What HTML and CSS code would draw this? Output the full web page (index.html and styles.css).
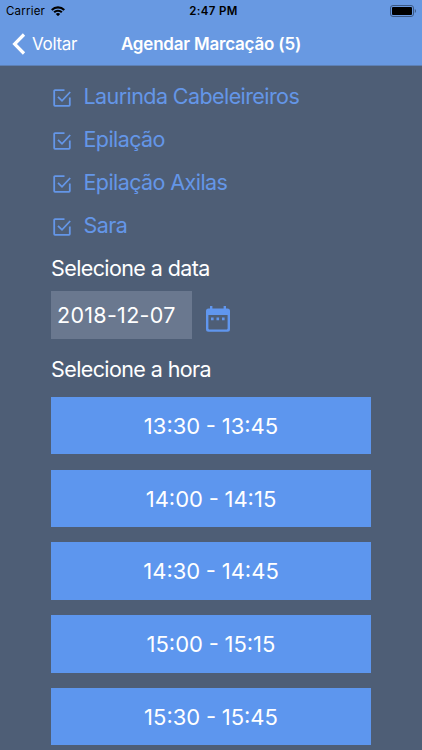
FILE: index.html
```html
<!DOCTYPE html>
<html lang="pt">

<head>
	<meta charset="utf-8">
	<title>Agendar Marcação</title>
	<link rel="stylesheet" href="styles.css">
</head>

<body>
	<header class="header">
		<div class="status-bar">
			<div class="carrier">
				<span>Carrier</span>
				<svg class="wifi" viewBox="0 0 14 10">
					<path d="M0 3.2a10 10 0 0 1 14 0L12.5 4.7a7.8 7.8 0 0 0-11 0z" />
					<path d="M2.4 5.6a6.6 6.6 0 0 1 9.2 0L10.1 7.1a4.4 4.4 0 0 0-6.2 0z" />
					<path d="M4.8 8a3.1 3.1 0 0 1 4.4 0L7 10.2z" />
				</svg>
			</div>
			<span class="clock">2:47 PM</span>
			<svg class="battery" viewBox="0 0 27 12">
				<rect class="battery-case" x=".5" y=".5" width="23" height="11" rx="2.5" />
				<rect x="2" y="2" width="20" height="8" rx="1" />
				<path class="battery-tip" d="M24.8 4v4c1.6-.7 1.6-3.3 0-4z" />
			</svg>
		</div>
		<nav class="nav-bar">
			<a class="back">
				<svg class="chevron" viewBox="0 0 14 22">
					<path d="M12 1.5L2.6 11l9.4 9.5" />
				</svg>
				<span>Voltar</span>
			</a>
			<h1 class="title">Agendar Marcação (5)</h1>
		</nav>
	</header>

	<main class="content">
		<ul class="choices">
			<li class="choice">
				<svg class="check" viewBox="0 0 18 18"><path d="M11.5 1.2H2a.8.8 0 0 0-.8.8v14c0 .4.4.8.8.8h14c.4 0 .8-.4.8-.8V8.5M5 7.8l4 4 8.2-8.8" /></svg>
				<span>Laurinda Cabeleireiros</span>
			</li>
			<li class="choice">
				<svg class="check" viewBox="0 0 18 18"><path d="M11.5 1.2H2a.8.8 0 0 0-.8.8v14c0 .4.4.8.8.8h14c.4 0 .8-.4.8-.8V8.5M5 7.8l4 4 8.2-8.8" /></svg>
				<span>Epilação</span>
			</li>
			<li class="choice">
				<svg class="check" viewBox="0 0 18 18"><path d="M11.5 1.2H2a.8.8 0 0 0-.8.8v14c0 .4.4.8.8.8h14c.4 0 .8-.4.8-.8V8.5M5 7.8l4 4 8.2-8.8" /></svg>
				<span>Epilação Axilas</span>
			</li>
			<li class="choice">
				<svg class="check" viewBox="0 0 18 18"><path d="M11.5 1.2H2a.8.8 0 0 0-.8.8v14c0 .4.4.8.8.8h14c.4 0 .8-.4.8-.8V8.5M5 7.8l4 4 8.2-8.8" /></svg>
				<span>Sara</span>
			</li>
		</ul>

		<p class="label">Selecione a data</p>
		<div class="date-row">
			<div class="date">2018-12-07</div>
			<svg class="calendar" viewBox="0 0 24 26">
				<path fill-rule="evenodd" d="M4 0h2.4v2.6h11.2V0H20v2.6h1.5A2.5 2.5 0 0 1 24 5.1v18.2a2.5 2.5 0 0 1-2.5 2.5h-19A2.5 2.5 0 0 1 0 23.3V5.1a2.5 2.5 0 0 1 2.5-2.5H4zM2.4 9v13.6c0 .5.3.8.8.8h17.6c.5 0 .8-.3.8-.8V9z" />
				<path d="M5 11.6h2.6v2.6H5zM10.5 11.6h2.6v2.6h-2.6zM16 11.6h2.6v2.6H16z" />
			</svg>
		</div>

		<p class="label">Selecione a hora</p>
		<div class="slots">
			<div class="slot">13:30 - 13:45</div>
			<div class="slot">14:00 - 14:15</div>
			<div class="slot">14:30 - 14:45</div>
			<div class="slot">15:00 - 15:15</div>
			<div class="slot">15:30 - 15:45</div>
		</div>
	</main>
</body>

</html>
```
FILE: styles.css
```css
body,
* {
	margin: 0;
	padding: 0;
	box-sizing: border-box;
}

body {
	height: 100vh;
	overflow: hidden;
	background: #4e5e76;
	color: #fff;
	font-family: Inter, "Liberation Sans", sans-serif;
	font-size: 21.5px;
}

.header {
	height: 65.5px;
	background: #6899e2;
	border-bottom: 1px solid #5d80b5;
}

.status-bar {
	display: grid;
	grid-template-columns: 1fr auto 1fr;
	align-items: center;
	height: 22px;
	padding: 0 5px 0 6px;
	color: #000;
	font-size: 11.5px;
}

.carrier {
	display: flex;
	align-items: center;
	gap: 6px;
	letter-spacing: 0.2px;
}

.wifi {
	width: 14px;
	height: 10px;
}

.clock {
	padding-left: 4px;
	font-weight: 600;
	letter-spacing: 0.35px;
}

.battery {
	justify-self: end;
	width: 27px;
	height: 12px;
}

.battery-case {
	fill: none;
	stroke: #3c5984;
}

.battery-tip { fill: #3c5984; }

.nav-bar {
	display: grid;
	grid-template-columns: 1fr auto 1fr;
	align-items: center;
	height: 43px;
	padding: 0 12px;
}

.back {
	display: flex;
	align-items: center;
	gap: 6px;
	font-size: 17px;
	letter-spacing: -0.3px;
}

.chevron {
	width: 14px;
	height: 22px;
	fill: none;
	stroke: #fff;
	stroke-width: 3.2;
}

.title {
	font-size: 17px;
	font-weight: 600;
	letter-spacing: -0.2px;
}

.content {
	padding: 8.5px 51px 0;
}

.choices {
	list-style: none;
	color: #6496e8;
	letter-spacing: -0.58px;
}

.choice {
	display: flex;
	align-items: center;
	gap: 12.5px;
	height: 43.1px;
	padding-left: 2px;
}

.check {
	width: 18px;
	height: 18px;
	margin-top: 4px;
	fill: none;
	stroke: #6496e8;
	stroke-width: 1.8;
}

.label {
	height: 43px;
	line-height: 44px;
	letter-spacing: -0.6px;
}

.date-row {
	display: flex;
	align-items: center;
	gap: 13.5px;
	height: 48px;
	margin: 1.6px 0 8.5px;
}

.date {
	width: 141px;
	height: 48px;
	padding-left: 6px;
	background: #6a788f;
	line-height: 48px;
	letter-spacing: 0.3px;
}

.calendar {
	width: 24px;
	height: 26px;
	margin-top: 9px;
	fill: #6096ee;
}

.slots {
	display: grid;
	gap: 15.3px;
	margin-top: 6.6px;
}

.slot {
	height: 57.4px;
	background: #5d96ee;
	font-size: 22px;
	line-height: 58.4px;
	word-spacing: -0.5px;
	text-align: center;
}
```
